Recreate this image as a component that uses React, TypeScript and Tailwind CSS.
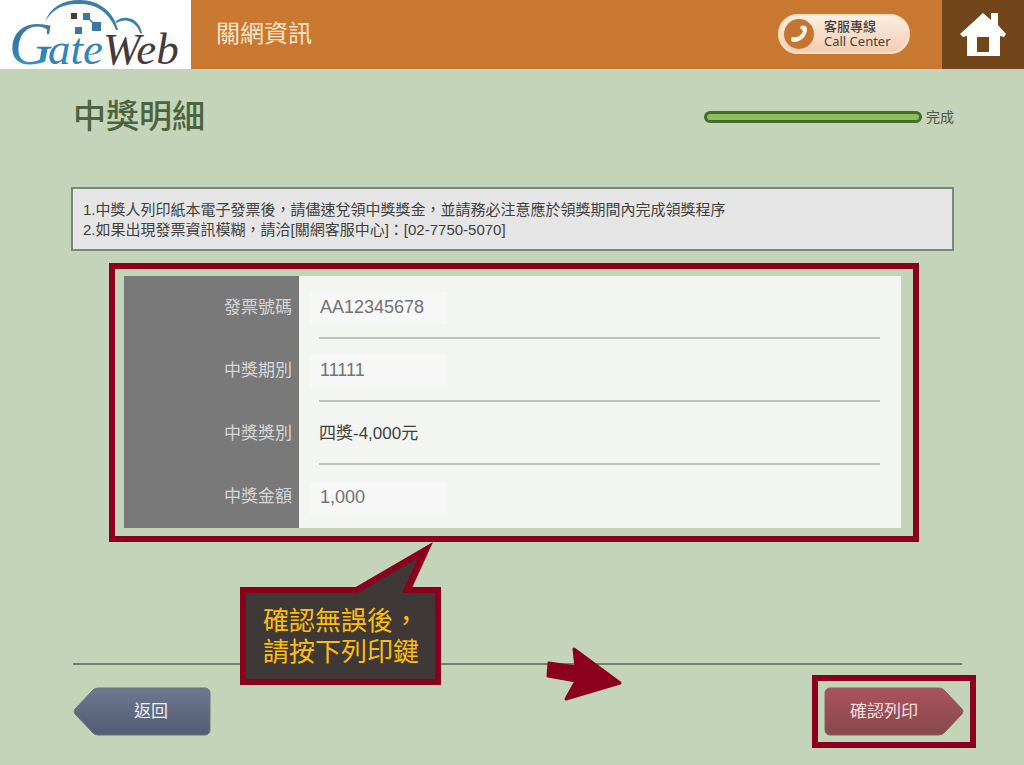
import type { ReactNode } from "react"

const notices = [
  "1.中獎人列印紙本電子發票後，請儘速兌領中獎獎金，並請務必注意應於領獎期間內完成領獎程序",
  "2.如果出現發票資訊模糊，請洽[關網客服中心]：[02-7750-5070]",
]

const fields = [
  { id: "invoice", label: "發票號碼", value: "AA12345678", editable: true },
  { id: "period", label: "中獎期別", value: "11111", editable: true },
  { id: "prize", label: "中獎獎別", value: "四獎-4,000元", editable: false },
  { id: "amount", label: "中獎金額", value: "1,000", editable: true },
]

function Logo() {
  return (
    <svg
      viewBox="0 0 191 69"
      className="h-[69px] w-[191px] overflow-visible"
      role="img"
      aria-label="GateWeb"
    >
      <defs>
        <linearGradient id="logoBlue" x1="0" y1="0" x2="0" y2="1">
          <stop offset="0" stopColor="#4a7f9f" />
          <stop offset="0.5" stopColor="#2f78a8" />
          <stop offset="1" stopColor="#3fa0d4" />
        </linearGradient>
      </defs>
      <path
        d="M45 22C50 7 63 0 80 0c19 0 34 12 38 30l-2 0C110 14 98 4 80 4 64 3 52 9 45 22z"
        fill="#3d7ea6"
      />
      <path
        d="M116 21c4-3 8-4 12-3 8 1 13 8 14 16l-2-1c-2-6-6-11-12-12-4-1-8 0-12 2z"
        fill="#3d7ea6"
      />
      <rect x="71" y="13" width="6" height="6" fill="#453a3a" />
      <path d="M83 13h7v6l3 3h8v9h-9v-8l-3-3h-6z" fill="#3878a3" />
      <rect x="75" y="27" width="7" height="7" fill="#3878a3" />
      <g fontFamily="'Liberation Serif', serif" fontStyle="italic">
        <text x="9" y="64" fontSize="61" fill="url(#logoBlue)">G</text>
        <text x="48" y="64" fontSize="45" fill="#3384b8">
          ate<tspan fill="#453a3a">Web</tspan>
        </text>
      </g>
    </svg>
  )
}

function Header() {
  return (
    <header className="flex h-[69px] bg-[#c87830]">
      <a href="#" className="shrink-0 bg-white">
        <Logo />
      </a>

      <div className="flex flex-1 items-center justify-between pr-8 pb-[2px] pl-[25px]">
        <p className="text-2xl text-[#fbe6cc]">關網資訊</p>

        <button
          type="button"
          className="flex h-10 w-[132px] items-center gap-[10px] rounded-full border-2 border-[#fde3c4] bg-linear-to-b from-[#fbeee2] to-[#f3cdb2] pl-1 text-left text-[#4c4038]"
        >
          <svg viewBox="0 0 30 30" className="size-[30px] shrink-0" aria-hidden="true">
            <circle cx="15" cy="15" r="15" fill="#c5752f" />
            <path
              d="M17 7c2-1 6-1 6 3 0 7-6 13-13 13-3 0-3-2-3-3 0-2 2-2 4-2h2c3-1 5-3 6-6l-2-2c-1-1-1-2 0-3z"
              fill="#fdf3e6"
            />
          </svg>
          <span className="text-[13px] leading-[14px] whitespace-nowrap">
            <span className="block font-medium">客服專線</span>
            <span className="block font-['Noto_Sans']">Call Center</span>
          </span>
        </button>
      </div>

      <a
        href="#"
        aria-label="首頁"
        className="flex w-[82px] shrink-0 items-center justify-center bg-[#73451b]"
      >
        <svg viewBox="0 0 48 46" className="h-[46px] w-12" aria-hidden="true">
          <path
            d="M24 1l8 7V1h7v12l8 9-2 3-4-1v20H8V24l-4 1-3-3zM18 25v15h12V25z"
            fill="#fff"
            fillRule="evenodd"
          />
        </svg>
      </a>
    </header>
  )
}

function Callout({ children }: { children: ReactNode }) {
  return (
    <div className="absolute top-full left-[131px] z-10 mt-[45px] w-[201px] border-6 border-[#8b001c] bg-[#3e3937] pt-[13px] pb-[11px] pl-[17px] text-[26px] leading-[31px] text-[#fdbd10]">
      <svg
        viewBox="0 0 80 54"
        className="absolute -top-[51px] left-[108px] h-[54px] w-20"
        aria-hidden="true"
      >
        <path d="M0 46L79 0 58 46v5H0z" fill="#8b001c" />
        <path d="M4 51L64 16 48 51v1H4z" fill="#3e3937" />
      </svg>
      {children}
    </div>
  )
}

export default function App() {
  return (
    <div
      lang="zh-Hant"
      className="min-h-screen bg-[#c4d4b8] pb-4 font-['Liberation_Sans','Noto_Sans_CJK_TC',sans-serif]"
    >
      <Header />

      <main>
        <div className="mr-[70px] ml-[73px] flex items-center justify-between pt-7">
          <h1 className="text-[33px] leading-10 font-medium text-[#4c633f]">中獎明細</h1>

          <div className="flex items-center gap-1">
            <div
              role="progressbar"
              aria-label="完成"
              aria-valuenow={100}
              className="h-3 w-[218px] rounded-full border-3 border-[#456b30] bg-[#8cc15a]"
            />
            <span className="text-sm text-[#4c5548]">完成</span>
          </div>
        </div>

        <div className="mr-[70px] ml-[71px] mt-[50px] border-2 border-[#7b8779] bg-[#e5e5e5] px-[10px] pt-[11px] pb-[9px] text-[15px] leading-5 text-[#3f3f3f]">
          {notices.map((line) => (
            <p key={line}>{line}</p>
          ))}
        </div>

        <section className="relative mt-3 mr-[105px] ml-[109px]">
          <div className="border-6 border-[#8b001c] pt-[7px] pr-3 pb-2 pl-[9px]">
            <div className="bg-[#f2f5f0]">
              {fields.map((field, i) => (
                <div key={field.id} className="flex h-[63px]">
                  <label
                    htmlFor={field.id}
                    className="flex w-[175px] shrink-0 items-center justify-end bg-[#797979] pr-[7px] text-[17px] text-[#d6d6d6]"
                  >
                    {field.label}
                  </label>

                  <div
                    className={
                      i < fields.length - 1
                        ? "mr-[21px] ml-5 flex flex-1 items-center border-b-2 border-[#c0c4be] pt-[2px]"
                        : "mr-[21px] ml-5 flex flex-1 items-center pt-[2px]"
                    }
                  >
                    {field.editable ? (
                      <input
                        id={field.id}
                        defaultValue={field.value}
                        className="-ml-[9px] h-8 w-[137px] bg-[#f7f7f8] px-[10px] text-lg text-[#737373] outline-none"
                      />
                    ) : (
                      <output id={field.id} className="text-[17px] text-[#3f3f3f]">
                        {field.value}
                      </output>
                    )}
                  </div>
                </div>
              ))}
            </div>
          </div>

          <Callout>
            <p>確認無誤後，</p>
            <p>請按下列印鍵</p>
          </Callout>
        </section>

        <footer className="relative mt-[121px] mr-12 ml-[73px]">
          <hr className="mr-[14px] border-t-2 border-[#737f6c]" />

          <svg
            viewBox="0 0 76 56"
            className="absolute -top-4 left-[474px] h-14 w-[76px] overflow-visible"
            aria-hidden="true"
          >
            <path
              d="M2 16L29 20 27 2 73 36 19 52 29 34 1 29z"
              fill="#8b001c"
              stroke="#8b001c"
              strokeWidth="3"
              strokeLinejoin="round"
            />
          </svg>

          <div className="mt-[10px] flex items-center justify-between">
            <button type="button" className="relative h-[49px] w-[138px] text-[17px] text-[#eef0f4]">
              <svg viewBox="0 0 138 49" className="absolute inset-0 size-full" aria-hidden="true">
                <defs>
                  <linearGradient id="backFill" x1="0" y1="0" x2="0" y2="1">
                    <stop offset="0" stopColor="#6d7990" />
                    <stop offset="1" stopColor="#525c73" />
                  </linearGradient>
                </defs>
                <path
                  d="M25 1H132a5 5 0 0 1 5 5V43a5 5 0 0 1-5 5H25q-3 0-5-2L2 27q-2-2.500 0-5L20 3q2-2 5-2z"
                  fill="url(#backFill)"
                  stroke="#68776f"
                />
              </svg>
              <span className="relative pl-[18px]">返回</span>
            </button>

            <div className="border-6 border-[#8b001c] p-[6px]">
              <button
                type="button"
                className="relative block h-[49px] w-[140px] text-[17px] text-[#f6dfe0]"
              >
                <svg viewBox="0 0 140 49" className="absolute inset-0 size-full" aria-hidden="true">
                  <defs>
                    <linearGradient id="confirmFill" x1="0" y1="0" x2="0" y2="1">
                      <stop offset="0" stopColor="#aa545c" />
                      <stop offset="1" stopColor="#87484c" />
                    </linearGradient>
                  </defs>
                  <path
                    d="M115 1H6a5 5 0 0 0-5 5V43a5 5 0 0 0 5 5H115q3 0 5-2L138 27q2-2.500 0-5L120 3q-2-2-5-2z"
                    fill="url(#confirmFill)"
                    stroke="#87645a"
                  />
                </svg>
                <span className="relative pr-5">確認列印</span>
              </button>
            </div>
          </div>
        </footer>
      </main>
    </div>
  )
}
